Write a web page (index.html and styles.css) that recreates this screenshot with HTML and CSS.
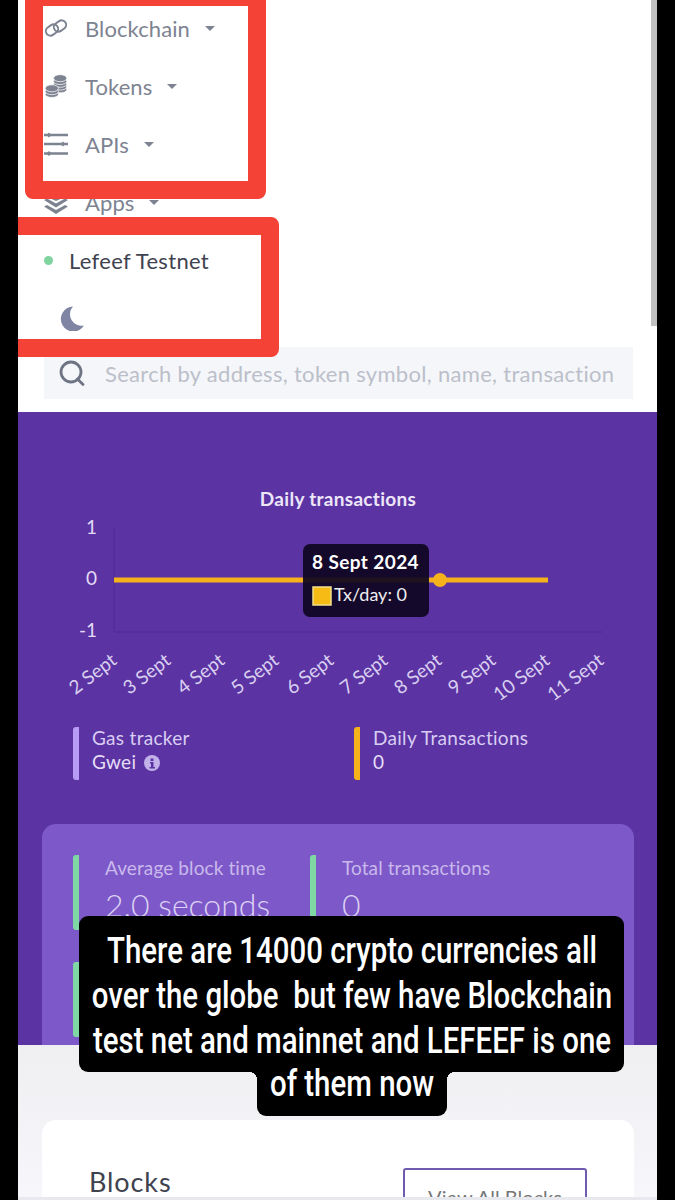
FILE: index.html
```html
<!DOCTYPE html>
<html lang="en">
<head>
    <meta charset="UTF-8">
    <meta name="viewport" content="width=device-width, initial-scale=1.0">
    <title>Lefeef Testnet Explorer</title>
    <link rel="stylesheet" href="styles.css">
</head>
<body>
    <div class="page">
        <nav class="nav">
            <div class="nav-item">
                <svg class="nav-icon" viewBox="0 0 24 24" fill="none" stroke="currentColor" stroke-width="2">
                    <rect x="1.500" y="9.500" width="13" height="9" rx="4.500" transform="rotate(-35 8 14)"/>
                    <rect x="9.500" y="5.500" width="13" height="9" rx="4.500" transform="rotate(-35 16 10)"/>
                </svg>
                <span>Blockchain</span><i class="caret"></i>
            </div>
            <div class="nav-item">
                <svg class="nav-icon" viewBox="0 0 24 26" fill="currentColor" stroke="#fff" stroke-width="0.800">
                    <ellipse cx="16.500" cy="17" rx="7.200" ry="3.400"/>
                    <ellipse cx="16.500" cy="14" rx="7.200" ry="3.400"/>
                    <ellipse cx="16.500" cy="11" rx="7.200" ry="3.400"/>
                    <ellipse cx="16.500" cy="8" rx="7.200" ry="3.400"/>
                    <ellipse cx="16.500" cy="4.500" rx="7.200" ry="3.800"/>
                    <ellipse cx="7.500" cy="22" rx="7.200" ry="3.400"/>
                    <ellipse cx="7.500" cy="19" rx="7.200" ry="3.400"/>
                    <ellipse cx="7.500" cy="15.500" rx="7.200" ry="3.800"/>
                </svg>
                <span>Tokens</span><i class="caret"></i>
            </div>
            <div class="nav-item">
                <svg class="nav-icon" viewBox="0 0 24 24" fill="currentColor">
                    <path d="M0 1.800 h24 v2.400 H0z M0 10.800 h24 v2.400 H0z M0 20.300 h24 v2.400 H0z"/>
                    <path d="M2.500 3 L5 .5 L7.500 3 L5 5.500z M16.500 12 L19 9.500 L21.500 12 L19 14.500z M2.500 21.500 L5 19 L7.500 21.500 L5 24z"/>
                </svg>
                <span>APIs</span><i class="caret"></i>
            </div>
            <div class="nav-item">
                <svg class="nav-icon" viewBox="0 0 24 24" fill="currentColor">
                    <path d="M12 0 L24 5.500 L12 11 L0 5.500z"/>
                    <path d="M0 10 L3 8.500 L12 13.500 L21 8.500 L24 10 L12 17.500z"/>
                    <path d="M0 16.500 L3 15 L12 20 L21 15 L24 16.500 L12 24z"/>
                </svg>
                <span>Apps</span><i class="caret"></i>
            </div>
            <div class="network">
                <i class="network-dot"></i>
                <span>Lefeef Testnet</span>
            </div>
            <div class="theme-row">
                <svg class="moon" viewBox="0 0 24 24" fill="currentColor">
                    <path d="M13 0 A12.500 12.500 0 1 0 24 19 A11.500 11.500 0 0 1 13 0z"/>
                </svg>
            </div>
        </nav>

        <div class="search-wrap">
            <div class="search">
                <svg class="search-icon" viewBox="0 0 26 26" fill="none" stroke="currentColor" stroke-width="2.800" stroke-linecap="round">
                    <circle cx="12" cy="12" r="10"/>
                    <path d="M18.500 19 L24 24.500"/>
                </svg>
                <span>Search by address, token symbol, name, transaction</span>
            </div>
        </div>

        <section class="hero">
            <svg class="chart" viewBox="0 0 639 220" width="639" height="220">
                <text class="chart-title" x="320" y="26" text-anchor="middle">Daily transactions</text>
                <text class="y-label" x="79" y="54" text-anchor="end">1</text>
                <text class="y-label" x="79" y="105" text-anchor="end">0</text>
                <text class="y-label" x="79" y="157" text-anchor="end">-1</text>
                <path class="axis" d="M96 47 V152 H584"/>
                <path class="series" d="M96 100 H530"/>
                <text class="x-label" transform="translate(100 183) rotate(-37)" text-anchor="end">2 Sept</text>
                <text class="x-label" transform="translate(154 183) rotate(-37)" text-anchor="end">3 Sept</text>
                <text class="x-label" transform="translate(208 183) rotate(-37)" text-anchor="end">4 Sept</text>
                <text class="x-label" transform="translate(262 183) rotate(-37)" text-anchor="end">5 Sept</text>
                <text class="x-label" transform="translate(317 183) rotate(-37)" text-anchor="end">6 Sept</text>
                <text class="x-label" transform="translate(371 183) rotate(-37)" text-anchor="end">7 Sept</text>
                <text class="x-label" transform="translate(425 183) rotate(-37)" text-anchor="end">8 Sept</text>
                <text class="x-label" transform="translate(479 183) rotate(-37)" text-anchor="end">9 Sept</text>
                <text class="x-label" transform="translate(533 183) rotate(-37)" text-anchor="end">10 Sept</text>
                <text class="x-label" transform="translate(587 183) rotate(-37)" text-anchor="end">11 Sept</text>
                <circle class="point" cx="422" cy="100" r="7"/>
                <rect class="tip" x="285" y="64" width="126" height="73" rx="7"/>
                <text class="tip-title" x="294" y="89">8 Sept 2024</text>
                <rect class="tip-swatch" x="295" y="107" width="18" height="18"/>
                <text class="tip-text" x="316" y="121">Tx/day: 0</text>
            </svg>

            <div class="stats">
                <div class="stat stat-gas">
                    <div class="stat-label">Gas tracker</div>
                    <div class="stat-value">Gwei
                        <svg class="info" viewBox="0 0 16 16"><circle cx="8" cy="8" r="8" fill="currentColor"/><path d="M6.500 3.500h3v2.500h-3z M6 7h3.500v5H11v1.500H5.500V12H7V8.500H6z" fill="#5b33a3"/></svg>
                    </div>
                </div>
                <div class="stat stat-daily">
                    <div class="stat-label">Daily Transactions</div>
                    <div class="stat-value">0</div>
                </div>
            </div>

            <div class="summary">
                <div class="tile">
                    <div class="tile-label">Average block time</div>
                    <div class="tile-value">2.0 seconds</div>
                </div>
                <div class="tile">
                    <div class="tile-label">Total transactions</div>
                    <div class="tile-value">0</div>
                </div>
                <div class="tile"></div>
            </div>
        </section>

        <section class="lower">
            <div class="blocks-card">
                <h2 class="blocks-title">Blocks</h2>
                <a class="view-all">View All Blocks</a>
            </div>
        </section>

        <!-- story annotations on top of the screenshot -->
        <div class="scrollbar"></div>
        <div class="mark mark-nav"></div>
        <div class="mark mark-network"></div>
        <div class="caption">
            <div class="caption-main">
                <div class="caption-text">There are 14000 crypto currencies all<br>over the globe&nbsp; but few have Blockchain<br>test net and mainnet and LEFEEF is one</div>
            </div>
            <div class="caption-last">
                <div class="caption-text">of them now</div>
            </div>
        </div>
    </div>
</body>
</html>
```

FILE: styles.css
```css
html, body {
    margin: 0;
    height: 1200px;
    overflow: hidden;
    background: #000;
}
body {
    font-family: 'Lato', 'Noto Sans', sans-serif;
}
.page {
    position: relative;
    width: 639px;
    height: 1200px;
    margin-left: 18px;
    background: #fff;
    overflow: hidden;
}
.nav-item {
    display: flex;
    align-items: center;
    height: 58px;
    padding: 0 0 2px 26px;
    box-sizing: border-box;
    color: #7d8391;
    font-size: 22px;
    letter-spacing: 0.1px;
}
.nav-icon {
    width: 24px;
    height: 24px;
    margin-right: 17px;
}
.caret {
    width: 0;
    height: 0;
    margin-left: 15px;
    border-left: 5px solid transparent;
    border-right: 5px solid transparent;
    border-top: 5px solid #7d8391;
}
.network {
    display: flex;
    align-items: center;
    height: 58px;
    padding: 0 0 2px 26px;
    box-sizing: border-box;
    color: #3f4350;
    font-size: 22px;
    letter-spacing: 0.3px;
}
.network-dot {
    width: 9px;
    height: 9px;
    margin-right: 16px;
    border-radius: 50%;
    background: #7fd4a0;
}
.theme-row {
    display: flex;
    align-items: center;
    height: 57px;
    padding-left: 42px;
}
.moon {
    width: 24px;
    height: 25px;
    color: #7f85a3;
}
.search-wrap {
    height: 65px;
    padding: 0 24px 0 26px;
}
.search {
    display: flex;
    align-items: center;
    height: 52px;
    padding-left: 15px;
    background: #f4f6fa;
    color: #bcbfc9;
    font-size: 22px;
    letter-spacing: 0.3px;
    white-space: nowrap;
}
.search-icon {
    width: 26px;
    height: 26px;
    margin-right: 20px;
    color: #6f7484;
}
.hero {
    height: 633px;
    padding-top: 68px;
    box-sizing: border-box;
    background: #5b33a3;
    overflow: hidden;
}
.chart {
    display: block;
    overflow: visible;
}
.chart text {
    font-family: 'Lato', 'Noto Sans', sans-serif;
}
.chart .chart-title {
    font-size: 19px;
    font-weight: 700;
    letter-spacing: 0.3px;
    fill: #ece6f8;
}
.chart .y-label {
    font-size: 19px;
    fill: #e3dbf5;
}
.chart .x-label {
    font-size: 19px;
    fill: #d9cff0;
}
.axis {
    fill: none;
    stroke: #4f2b92;
    stroke-width: 1;
}
.series {
    stroke: #f5b21b;
    stroke-width: 5;
}
.point {
    fill: #f5b21b;
}
.tip {
    fill: #0f0620;
    fill-opacity: 0.93;
}
.chart .tip-title {
    font-size: 19px;
    font-weight: 700;
    letter-spacing: 0.4px;
    fill: #fff;
}
.chart .tip-text {
    font-size: 18px;
    fill: #eee;
}
.tip-swatch {
    fill: #f7bb16;
    stroke: #f4e08c;
    stroke-width: 1.500;
}
.stats {
    display: flex;
    height: 53px;
    margin-top: 27px;
    padding-left: 55px;
}
.stat {
    width: 281px;
    padding-left: 13px;
    border-left: 6px solid #b79bf5;
    border-radius: 3px;
    box-sizing: border-box;
    font-size: 19px;
    letter-spacing: 0.3px;
    color: #d8cdf2;
}
.stat-daily {
    border-left-color: #f5b21b;
}
.stat-label {
    line-height: 22px;
}
.stat-value {
    margin-top: 1px;
    line-height: 24px;
    color: #e6def7;
}
.info {
    width: 16px;
    height: 16px;
    margin-left: 3px;
    vertical-align: -2px;
    color: #c3b2ea;
}
.summary {
    display: grid;
    grid-template-columns: 237px 260px;
    grid-auto-rows: 75px;
    row-gap: 32px;
    height: 400px;
    margin: 44px 23px 0 24px;
    padding: 31px 0 0 31px;
    box-sizing: border-box;
    background: #7d58c8;
    border-radius: 14px;
}
.tile {
    padding-left: 26px;
    border-left: 6px solid #7fd8a4;
    border-radius: 3px;
}
.tile-label {
    font-size: 19px;
    letter-spacing: 0.1px;
    line-height: 26px;
    color: #c9b8ec;
}
.tile-value {
    margin-top: 4px;
    font-size: 32px;
    font-weight: 300;
    line-height: 40px;
    color: #dcd2f3;
}
.lower {
    height: 155px;
    padding: 75px 23px 0 24px;
    box-sizing: border-box;
    background: linear-gradient(#efeff2, #f7f7fb);
    border-bottom: 3px solid #e8e9ef;
}
.blocks-card {
    display: flex;
    justify-content: space-between;
    height: 77px;
    padding: 48px 47px 0 47px;
    box-sizing: border-box;
    background: #fff;
    border-radius: 14px 14px 0 0;
    overflow: hidden;
}
.blocks-title {
    margin: 0;
    font-size: 27px;
    font-weight: 400;
    letter-spacing: 0.9px;
    line-height: 28px;
    color: #3e424e;
}
.view-all {
    flex: none;
    width: 184px;
    height: 54px;
    border: 2px solid #6f5bb0;
    border-radius: 3px;
    box-sizing: border-box;
    font-size: 20px;
    line-height: 54px;
    text-align: center;
    color: #777;
}
.scrollbar {
    position: absolute;
    top: 0;
    right: 0;
    width: 6px;
    height: 326px;
    background: #c1c1c1;
}
.mark {
    position: absolute;
    border: 18px solid #f44336;
    border-radius: 8px;
    box-sizing: border-box;
}
.mark-nav {
    top: -12px;
    left: 7px;
    width: 241px;
    height: 211px;
}
.mark-network {
    top: 217px;
    left: -20px;
    width: 281px;
    height: 140px;
}
.caption {
    position: absolute;
    top: 916px;
    left: 61px;
    width: 545px;
    display: flex;
    flex-direction: column;
    align-items: center;
    font-family: 'Roboto', sans-serif;
    font-size: 37px;
    font-weight: 500;
    line-height: 45px;
    text-align: center;
    color: #fff;
}
.caption-main {
    width: 100%;
    height: 156px;
    padding-top: 12px;
    box-sizing: border-box;
    background: #000;
    border-radius: 9px;
}
.caption-last {
    position: relative;
    width: 190px;
    height: 44px;
    background: #000;
    border-radius: 0 0 9px 9px;
    line-height: 24px;
}
.caption-last::before,
.caption-last::after {
    content: "";
    position: absolute;
    top: 0;
    width: 8px;
    height: 8px;
}
.caption-last::before {
    left: -8px;
    background: radial-gradient(circle at 0 100%, transparent 8px, #000 8px);
}
.caption-last::after {
    right: -8px;
    background: radial-gradient(circle at 100% 100%, transparent 8px, #000 8px);
}
/* the story font is a tall narrow one, squeeze to get the same widths */
.caption-text {
    position: relative;
    left: 50%;
    width: 700px;
    margin-left: -350px;
    transform: scaleX(0.795);
    white-space: nowrap;
}
```
